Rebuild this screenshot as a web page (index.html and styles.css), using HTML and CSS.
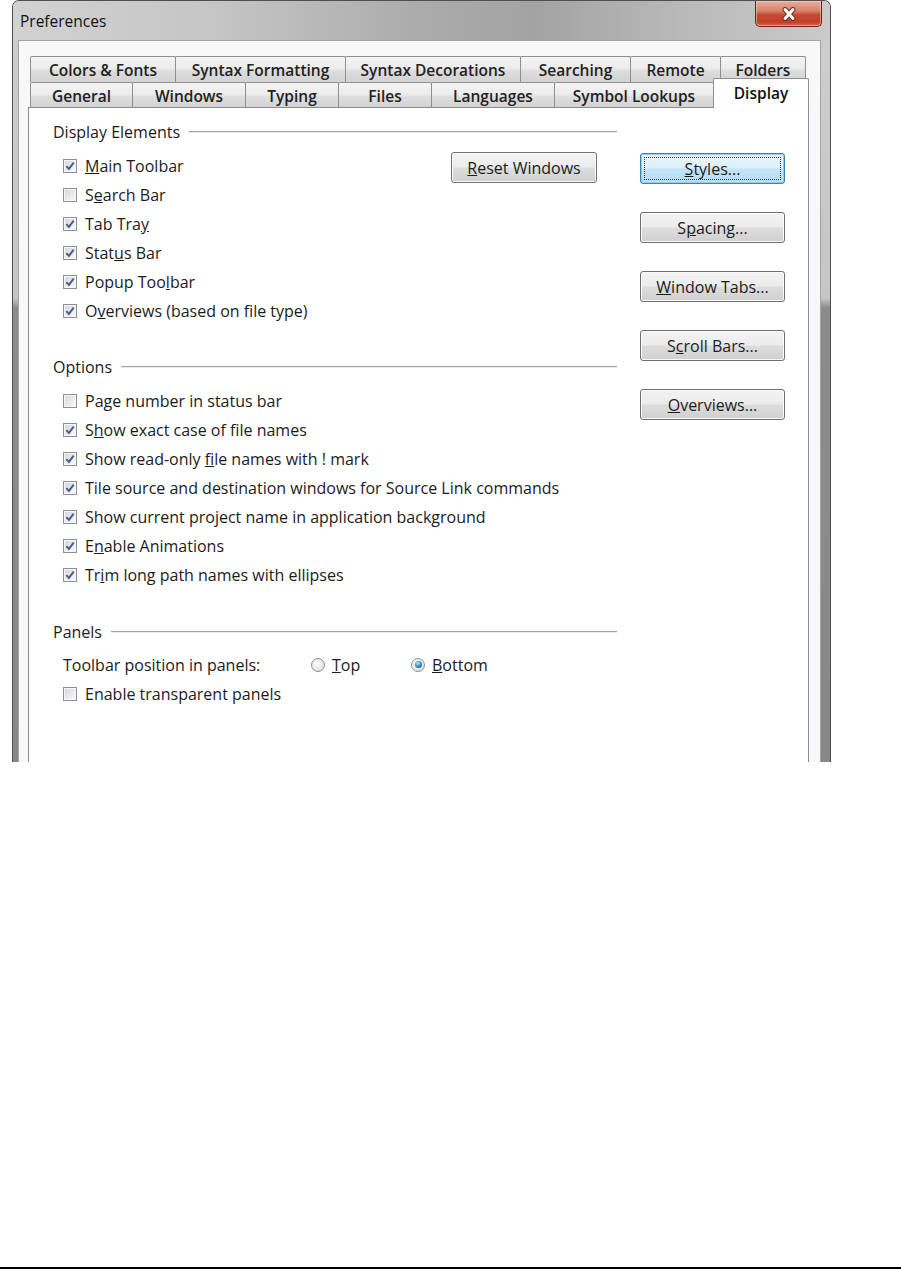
FILE: index.html
```html
<!DOCTYPE html>
<html lang="en">
<head>
    <meta charset="UTF-8">
    <meta name="viewport" content="width=device-width, initial-scale=1.0">
    <title>Preferences</title>
    <link rel="stylesheet" href="styles.css">
</head>
<body>

<div class="page">
    <div class="window">
        <div class="titlebar">
            <span class="title">Preferences</span>
            <div class="close">
                <svg width="20" height="14" viewBox="0 0 20 14">
                    <path d="M6 2.5 L14 11.5 M14 2.5 L6 11.5" stroke="#6d3428" stroke-width="5" stroke-linecap="round"/>
                    <path d="M6 2.5 L14 11.5 M14 2.5 L6 11.5" stroke="#fff" stroke-width="3" stroke-linecap="round"/>
                </svg>
            </div>
        </div>

        <div class="frame">
            <div class="client">
                <div class="tabrow row1">
                    <div class="tab">Colors &amp; Fonts</div>
                    <div class="tab">Syntax Formatting</div>
                    <div class="tab">Syntax Decorations</div>
                    <div class="tab">Searching</div>
                    <div class="tab">Remote</div>
                    <div class="tab">Folders</div>
                </div>
                <div class="tabrow row2">
                    <div class="tab">General</div>
                    <div class="tab">Windows</div>
                    <div class="tab">Typing</div>
                    <div class="tab">Files</div>
                    <div class="tab">Languages</div>
                    <div class="tab">Symbol Lookups</div>
                    <div class="tab active">Display</div>
                </div>

                <div class="panel">
                    <div class="main">
                        <!-- Display Elements -->
                        <div class="group">
                            <div class="group-title"><span>Display Elements</span><i class="rule"></i></div>
                            <div class="group-body split">
                                <div class="list">
                                    <div class="check"><span class="box"><svg viewBox="0 0 12 12"><path d="M2.4 6.1 L4.9 8.9 L9.7 2.7"/></svg></span><span><u>M</u>ain Toolbar</span></div>
                                    <div class="check"><span class="box"></span><span>S<u>e</u>arch Bar</span></div>
                                    <div class="check"><span class="box"><svg viewBox="0 0 12 12"><path d="M2.4 6.1 L4.9 8.9 L9.7 2.7"/></svg></span><span>Tab Tra<u>y</u></span></div>
                                    <div class="check"><span class="box"><svg viewBox="0 0 12 12"><path d="M2.4 6.1 L4.9 8.9 L9.7 2.7"/></svg></span><span>Stat<u>u</u>s Bar</span></div>
                                    <div class="check"><span class="box"><svg viewBox="0 0 12 12"><path d="M2.4 6.1 L4.9 8.9 L9.7 2.7"/></svg></span><span>Popup Too<u>l</u>bar</span></div>
                                    <div class="check"><span class="box"><svg viewBox="0 0 12 12"><path d="M2.4 6.1 L4.9 8.9 L9.7 2.7"/></svg></span><span>O<u>v</u>erviews (based on file type)</span></div>
                                </div>
                                <button class="btn reset"><u>R</u>eset Windows</button>
                            </div>
                        </div>

                        <!-- Options -->
                        <div class="group options">
                            <div class="group-title"><span>Options</span><i class="rule"></i></div>
                            <div class="group-body list">
                                <div class="check"><span class="box"></span><span>Pa<u>g</u>e number in status bar</span></div>
                                <div class="check"><span class="box"><svg viewBox="0 0 12 12"><path d="M2.4 6.1 L4.9 8.9 L9.7 2.7"/></svg></span><span>S<u>h</u>ow exact case of file names</span></div>
                                <div class="check"><span class="box"><svg viewBox="0 0 12 12"><path d="M2.4 6.1 L4.9 8.9 L9.7 2.7"/></svg></span><span>Show read-only <u>f</u>ile names with ! mark</span></div>
                                <div class="check"><span class="box"><svg viewBox="0 0 12 12"><path d="M2.4 6.1 L4.9 8.9 L9.7 2.7"/></svg></span><span>Tile source and destination windows for Source Link commands</span></div>
                                <div class="check"><span class="box"><svg viewBox="0 0 12 12"><path d="M2.4 6.1 L4.9 8.9 L9.7 2.7"/></svg></span><span>Show current project name in application background</span></div>
                                <div class="check"><span class="box"><svg viewBox="0 0 12 12"><path d="M2.4 6.1 L4.9 8.9 L9.7 2.7"/></svg></span><span>E<u>n</u>able Animations</span></div>
                                <div class="check"><span class="box"><svg viewBox="0 0 12 12"><path d="M2.4 6.1 L4.9 8.9 L9.7 2.7"/></svg></span><span>Tr<u>i</u>m long path names with ellipses</span></div>
                            </div>
                        </div>

                        <!-- Panels -->
                        <div class="group panels">
                            <div class="group-title"><span>Panels</span><i class="rule"></i></div>
                            <div class="group-body list">
                                <div class="choice">
                                    <span class="choice-label">Toolbar position in panels:</span>
                                    <div class="radio"><span class="dot"></span><span><u>T</u>op</span></div>
                                    <div class="radio"><span class="dot on"></span><span><u>B</u>ottom</span></div>
                                </div>
                                <div class="check"><span class="box"></span><span>Enable transparent panels</span></div>
                            </div>
                        </div>
                    </div>

                    <div class="side">
                        <button class="btn focus"><span><u>S</u>tyles...</span></button>
                        <button class="btn">S<u>p</u>acing...</button>
                        <button class="btn"><u>W</u>indow Tabs...</button>
                        <button class="btn">S<u>c</u>roll Bars...</button>
                        <button class="btn"><u>O</u>verviews...</button>
                    </div>
                </div>
            </div>
        </div>
    </div>
</div>

</body>
</html>
```

FILE: styles.css
```css
body {
    margin: 0;
    background: #fff;
    font-family: "Open Sans", "Noto Sans", Arial, sans-serif;
    color: #1c1c1c;
    overflow: hidden;
}
.page {
    height: 1269px;
    box-sizing: border-box;
    border-bottom: 2px solid #000;
}

/* window chrome */
.window {
    margin-left: 12px;
    width: 819px;
    height: 762px;
    box-sizing: border-box;
    border: 1px solid #4f4f4f;
    border-bottom: 0;
    border-radius: 7px 7px 0 0;
    display: flex;
    flex-direction: column;
    overflow: hidden;
}
.titlebar {
    height: 39px;
    flex: none;
    display: flex;
    justify-content: space-between;
    align-items: flex-start;
    background: linear-gradient(to right, #d2d2d2 0%, #c5c5c5 25%, #ababab 50%, #a3a3a3 64%, #b9b9b9 82%, #cacaca 100%);
}
.title {
    margin: 9px 0 0 7px;
    font-size: 15.5px;
    color: #111;
}
.close {
    width: 67px;
    height: 26px;
    margin-right: 8px;
    box-sizing: border-box;
    border: 1px solid #6b2418;
    border-top: 0;
    border-radius: 0 0 5px 5px;
    background: linear-gradient(to bottom, #e9ad9e 0%, #d9806b 40%, #c64a32 55%, #c2402a 85%, #d46a52 100%);
    box-shadow: inset 0 0 0 1px rgba(255, 220, 210, 0.5);
    display: flex;
    align-items: center;
    justify-content: center;
}
.frame {
    flex: 1;
    display: flex;
    padding: 0 9px 0 5px;
    background: linear-gradient(to bottom, #cdcdcd 0, #c6c6c6 258px, #8c8c8c 268px, #888 100%);
}
.client {
    flex: 1;
    display: flex;
    flex-direction: column;
    border: 1px solid #a4a4a4;
    border-bottom: 0;
    background: #f8f8f8;
    padding: 15px 0 0 9px;
}

/* tabs */
.tabrow {
    display: grid;
    margin-left: 2px;
    font-size: 15.5px;
    font-weight: 600;
    color: #222;
}
.row1 {
    grid-template-columns: 145px 170px 175px 110px 90px 85px;
    height: 26px;
}
.row2 {
    grid-template-columns: 102px 113px 93px 93px 123px 159px 95px;
    height: 25px;
}
.tab {
    margin-right: -1px;
    border: 1px solid #8d8f95;
    border-bottom: 0;
    border-radius: 2px 2px 0 0;
    background: linear-gradient(to bottom, #f4f4f4 0%, #ececec 45%, #dedede 55%, #d2d2d2 100%);
    display: flex;
    align-items: center;
    justify-content: center;
}
.tab.active {
    position: relative;
    z-index: 2;
    margin-top: -4px;
    height: 30px;
    background: #fff;
    align-items: flex-start;
    padding-top: 3px;
    box-sizing: border-box;
    color: #111;
}

/* tab page */
.panel {
    flex: 1;
    display: flex;
    width: 781px;
    box-sizing: border-box;
    border: 1px solid #898c95;
    border-bottom: 0;
    background: #fff;
    padding: 14px 0 0 24px;
    font-size: 16px;
}
.main {
    width: 564px;
}
.side {
    margin-left: 23px;
    padding-top: 31px;
    display: flex;
    flex-direction: column;
    gap: 28px;
}
.group-title {
    height: 20px;
    display: flex;
    align-items: center;
}
.rule {
    flex: 1;
    margin-left: 9px;
    border-top: 1px solid #a2a2a2;
    border-bottom: 1px solid #ececec;
}
.group-body {
    margin-top: 9px;
}
.split {
    display: flex;
    align-items: flex-start;
}
.options {
    margin-top: 32px;
}
.panels {
    margin-top: 33px;
}
.panels .group-body {
    margin-top: 8px;
}
.list {
    padding-left: 10px;
}
.check,
.choice,
.radio {
    height: 29px;
    display: flex;
    align-items: center;
}
.box {
    width: 14px;
    height: 14px;
    box-sizing: border-box;
    border: 1px solid #8e8f8f;
    background: linear-gradient(135deg, #d2d5da 0%, #e9ebee 55%, #fafafa 100%);
    box-shadow: inset 0 0 0 1px #f7f7f7;
    margin-right: 8px;
    display: flex;
}
.box svg {
    width: 12px;
    height: 12px;
}
.box path {
    fill: none;
    stroke: #4a5d8c;
    stroke-width: 2;
}
.choice-label {
    width: 248px;
}
.radio {
    width: 100px;
}
.dot {
    width: 14px;
    height: 14px;
    box-sizing: border-box;
    border-radius: 50%;
    border: 1px solid #8e8f8f;
    background: radial-gradient(circle at 40% 35%, #fdfdfd 0%, #e6e6e6 60%, #cfcfcf 100%);
    margin-right: 7px;
    display: flex;
    align-items: center;
    justify-content: center;
}
.dot.on::after {
    content: "";
    width: 7px;
    height: 7px;
    border-radius: 50%;
    background: radial-gradient(circle at 40% 35%, #c6ecfd 0%, #3a94d0 45%, #0d4f86 100%);
}

/* push buttons */
.btn {
    width: 145px;
    height: 31px;
    box-sizing: border-box;
    border: 1px solid #707070;
    border-radius: 3px;
    background: linear-gradient(to bottom, #f3f3f3 0%, #ececec 48%, #dddddd 52%, #d0d0d0 100%);
    box-shadow: inset 0 0 0 1px #fbfbfb;
    font-family: inherit;
    font-size: 16px;
    color: #1c1c1c;
    padding: 0;
    cursor: pointer;
}
.btn.reset {
    width: 146px;
    margin: 1px 20px 0 auto;
}
.btn.focus {
    border-color: #3c7fb1;
    background: linear-gradient(to bottom, #eaf6fd 0%, #dcf0fb 48%, #c4e5f8 52%, #b4dcf3 100%);
    box-shadow: inset 0 0 0 1px #94cdf0;
    display: flex;
    align-items: center;
    justify-content: center;
}
.btn.focus span {
    width: 137px;
    height: 23px;
    box-sizing: border-box;
    border: 1px dotted #3a3a3a;
    display: flex;
    align-items: center;
    justify-content: center;
}
```
